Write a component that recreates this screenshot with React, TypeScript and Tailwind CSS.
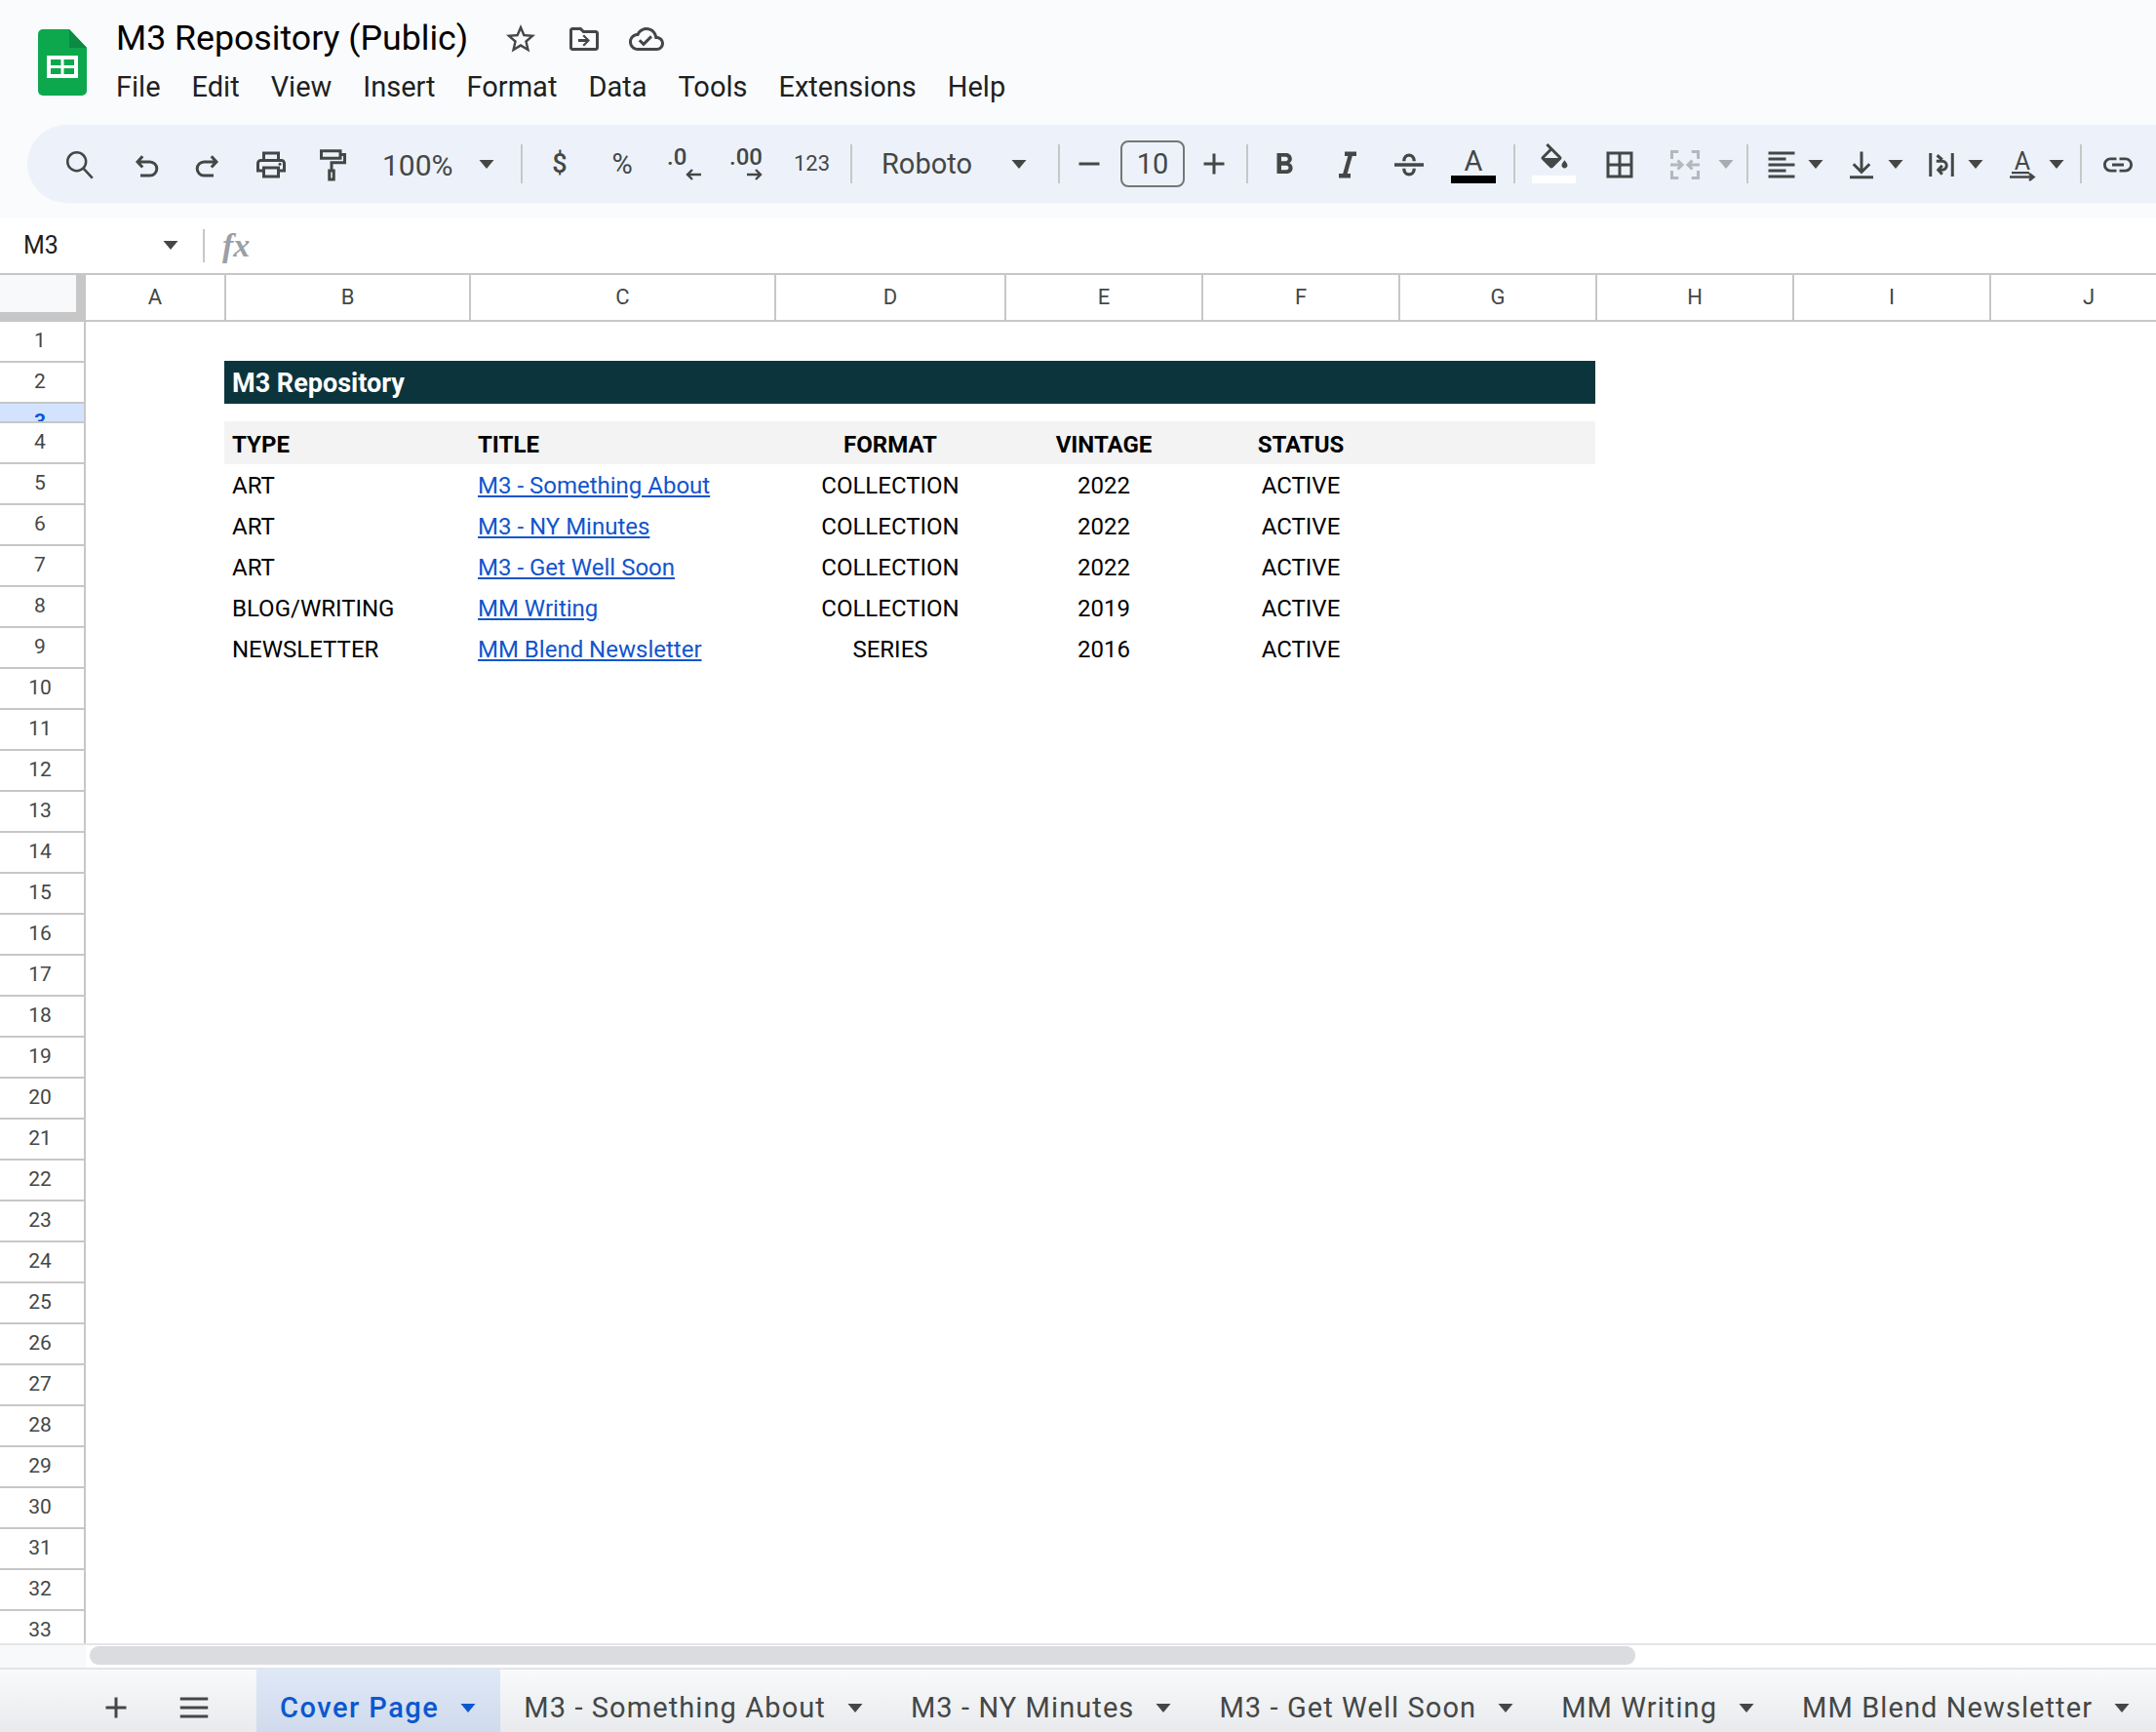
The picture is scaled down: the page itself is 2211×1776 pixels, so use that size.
import type { ReactNode } from "react";

const iconColor = "#444746";

function Icon({ d, className = "", fill = iconColor }: { d: string; className?: string; fill?: string }) {
  return (
    <svg className={`h-[36px] w-[36px] shrink-0 ${className}`} viewBox="0 0 24 24" fill={fill}>
      <path d={d} />
    </svg>
  );
}

function Line({ d, className = "", width = 2, color = iconColor }: { d: string; className?: string; width?: number; color?: string }) {
  return (
    <svg className={`h-[36px] w-[36px] shrink-0 ${className}`} viewBox="0 0 24 24" fill="none" stroke={color} strokeWidth={width}>
      <path d={d} />
    </svg>
  );
}

function Caret({ className = "", color = iconColor }: { className?: string; color?: string }) {
  return (
    <svg className={`h-[9px] w-[18px] shrink-0 ${className}`} viewBox="0 0 18 9" fill={color}>
      <path d="M1.5 0h15L9 9z" />
    </svg>
  );
}

function Sep({ className = "" }: { className?: string }) {
  return <div className={`h-[40px] w-[2px] shrink-0 bg-[#c7c7c7] ${className}`} />;
}

function Logo() {
  return (
    <svg className="mt-[30px] ml-[39px] h-[68px] w-[50px] shrink-0" viewBox="0 0 50 68">
      <path d="M5 0h27l18 19v44a5 5 0 0 1-5 5H5a5 5 0 0 1-5-5V5a5 5 0 0 1 5-5z" fill="#0da84e" />
      <path d="M32 0v19h18z" fill="#0b8a41" />
      <path d="M9 27h32v23H9z" fill="#fff" />
      <path d="M13 31h10.500v6H13zM26.500 31H37v6H26.500zM13 40h10.500v6H13zM26.500 40H37v6H26.500z" fill="#0da84e" />
    </svg>
  );
}

const menus = ["File", "Edit", "View", "Insert", "Format", "Data", "Tools", "Extensions", "Help"];

function Toolbar() {
  return (
    <div className="flex h-[80px] ml-[28px] items-center rounded-l-[40px] bg-[#edf2fa] pl-[36px] text-[#444746]">
      <Line className="mt-[2px]" width={1.7} d="M9.800 3.500a6.300 6.300 0 1 0 0 12.600 6.300 6.300 0 0 0 0-12.600zM14.200 14.300l6.300 6.800" />
      <Line className="ml-[32px] mt-[4px]" width={2} d="M9.500 5.500 6 9.300l3.500 3.700M6 9.300h8.500a4.700 4.700 0 0 1 0 9.400H8" />
      <Line className="ml-[27px] mt-[4px]" width={2} d="M14.500 5.500 18 9.300 14.500 13M18 9.300H9.500a4.700 4.700 0 0 0 0 9.400H16" />
      <svg className="ml-[29px] mt-[2px] h-[36px] w-[36px] shrink-0" viewBox="0 0 24 24" fill={iconColor}>
        <path d="M19 8h-1V3H6v5H5c-1.660 0-3 1.340-3 3v6h4v4h12v-4h4v-6c0-1.660-1.340-3-3-3zM8 5h8v3H8V5zm8 14H8v-4h8v4zm4-4h-2v-2H6v2H4v-4c0-.550.450-1 1-1h14c.550 0 1 .450 1 1v4z" />
        <circle cx="18" cy="11.500" r="1" />
      </svg>
      <Line className="ml-[26px] mt-[2px]" width={2} d="M5 2.500h13v5H5zM18 5h3v5.500h-9V16M10.500 16h3v6h-3z" />
      <span className="ml-[34px] mt-[3px] w-[74px] shrink-0 text-[30px] leading-none">100%</span>
      <Caret className="ml-[24px]" />
      <Sep className="ml-[26px]" />
      <span className="ml-[20px] w-[36px] shrink-0 text-center text-[27px] font-medium leading-none">$</span>
      <span className="ml-[28px] w-[36px] shrink-0 text-center text-[29px] leading-none">%</span>
      <div className="ml-[27px] mt-[2px] flex h-[36px] w-[36px] shrink-0 flex-col items-start pl-[1px]">
        <span className="h-[20px] text-[24px] font-medium leading-[20px]">.0</span>
        <svg className="ml-[19px] mt-[2px] h-[12px] w-[16px]" viewBox="0 0 16 12" fill="none" stroke={iconColor} strokeWidth={2.4}>
          <path d="M16 6H2M7 1 2 6l5 5" />
        </svg>
      </div>
      <div className="ml-[29px] mt-[2px] flex h-[36px] w-[36px] shrink-0 flex-col items-start">
        <span className="h-[20px] text-[24px] font-medium leading-[20px]">.00</span>
        <svg className="ml-[18px] mt-[2px] h-[12px] w-[16px]" viewBox="0 0 16 12" fill="none" stroke={iconColor} strokeWidth={2.4}>
          <path d="M0 6h14M9 1l5 5-5 5" />
        </svg>
      </div>
      <span className="ml-[30px] w-[36px] shrink-0 text-center text-[22px] leading-none">123</span>
      <Sep className="ml-[22px]" />
      <span className="ml-[30px] w-[94px] shrink-0 text-[29px] leading-none">Roboto</span>
      <Caret className="ml-[38px]" />
      <Sep className="ml-[31px]" />
      <Line className="ml-[12px]" d="M5 12h14" />
      <div className="ml-[14px] flex h-[48px] w-[66px] shrink-0 items-center justify-center rounded-[8px] border-2 border-[#747775] text-[29px] leading-none">10</div>
      <Line className="ml-[12px]" d="M5 12h14M12 5v14" />
      <Sep className="ml-[15px]" />
      <Icon className="ml-[19px] mt-[2px]" d="M15.600 10.790c.970-.670 1.650-1.770 1.650-2.790 0-2.260-1.750-4-4-4H7v14h7.040c2.090 0 3.710-1.700 3.710-3.790 0-1.520-.860-2.820-2.150-3.420zM10 6.500h3c.830 0 1.500.670 1.500 1.500s-.670 1.500-1.500 1.500h-3v-3zm3.500 9H10v-3h3.500c.830 0 1.500.670 1.500 1.500s-.670 1.500-1.500 1.500z" />
      <Icon className="ml-[29px] mt-[2px]" d="M10 3v3h2.210l-3.420 12H6v3h8v-3h-2.210l3.420-12H18V3z" />
      <Line className="ml-[27px] mt-[2px]" width={2.2} d="M2 12h20M8.500 9.500c0-5.500 7-5.500 7 0M8.500 14.500c0 5.500 7 5.500 7 0" />
      <div className="ml-[25px] flex w-[46px] shrink-0 flex-col items-center self-start pt-[22px]">
        <span className="h-[30px] text-[29px] leading-[30px]">A</span>
        <div className="h-[8px] w-[46px] bg-black" />
      </div>
      <Sep className="ml-[18px]" />
      <div className="ml-[17px] flex w-[45px] shrink-0 flex-col items-center self-start pt-[19px]">
        <svg className="-mb-[3px] h-[36px] w-[36px]" viewBox="0 0 24 24" fill={iconColor}>
          <path d="M16.560 8.940 7.620 0 6.210 1.410l2.380 2.380-5.150 5.150c-.590.590-.590 1.540 0 2.120l5.500 5.500c.290.290.680.440 1.060.440s.770-.150 1.060-.440l5.500-5.500c.590-.580.590-1.530 0-2.120zM5.210 10 10 5.210 14.790 10H5.210zM19 11.500s-2 2.170-2 3.500c0 1.100.900 2 2 2s2-.900 2-2c0-1.330-2-3.500-2-3.500z" />
        </svg>
        <div className="h-[8px] w-[45px] bg-white" />
      </div>
      <Icon className="ml-[27px] mt-[2px]" d="M3 3v18h18V3H3zm8 16H5v-6h6v6zm0-8H5V5h6v6zm8 8h-6v-6h6v6zm0-8h-6V5h6v6z" />
      <Line className="ml-[31px] mt-[2px]" color="#b4b7bd" width={2} d="M3 8V3h4.500M21 8V3h-4.500M3 16v5h4.500M21 16v5h-4.500M2 12h8M7 9l3 3-3 3M22 12h-8M17 9l-3 3 3 3" />
      <Caret className="ml-[15px]" color="#a8abb1" />
      <Sep className="ml-[12px]" />
      <Icon className="ml-[16px] mt-[2px]" d="M15 15H3v2h12v-2zm0-8H3v2h12V7zM3 13h18v-2H3v2zm0 8h18v-2H3v2zM3 3v2h18V3H3z" />
      <Caret className="ml-[8px]" />
      <Line className="ml-[20px] mt-[2px]" d="M12 3v14M6.500 11.500l5.500 5.500 5.500-5.500M4 20.500h16" />
      <Caret className="ml-[8px]" />
      <Line className="ml-[20px] mt-[2px]" d="M4.500 4v16M19.500 4v16M9 5.500l3.500 3M8.500 9.500h4a3 3 0 0 1 0 6H10M12.500 12.500 9.800 15.500l2.700 3" />
      <Caret className="ml-[8px]" />
      <div className="ml-[21px] flex w-[36px] shrink-0 flex-col items-center self-start pt-[27px]">
        <span className="h-[21px] text-[25px] leading-[21px]">A</span>
        <svg className="h-[12px] w-[36px]" viewBox="0 0 36 12" fill="none" stroke={iconColor} strokeWidth={2.500}>
          <path d="M7 1h18M5 5.500h24M25 2l4.500 3.500L25 9" />
        </svg>
      </div>
      <Caret className="ml-[8px]" />
      <Sep className="ml-[15px]" />
      <Icon className="ml-[19px] mt-[2px]" d="M3.900 12c0-1.710 1.390-3.100 3.100-3.100h4V7H7c-2.760 0-5 2.240-5 5s2.240 5 5 5h4v-1.900H7c-1.710 0-3.100-1.390-3.100-3.100zM8 13h8v-2H8v2zm9-6h-4v1.900h4c1.710 0 3.100 1.390 3.100 3.100s-1.390 3.100-3.100 3.100h-4V17h4c2.760 0 5-2.240 5-5s-2.240-5-5-5z" />
    </div>
  );
}

function TopBar() {
  return (
    <div className="flex h-[223px] shrink-0 flex-col bg-[#f9fbfd]">
      <div className="flex h-[128px] shrink-0">
        <Logo />
        <div className="ml-[30px] flex flex-col pt-[15px]">
          <div className="flex h-[50px] items-center">
            <span className="w-[360px] whitespace-nowrap text-[35.700px] leading-none text-black">M3 Repository (Public)</span>
            <Icon className="ml-[37px]" d="m22 9.240-7.190-.620L12 2 9.190 8.630 2 9.240l5.460 4.730L5.820 21 12 17.270 18.180 21l-1.630-7.030L22 9.240zM12 15.400l-3.760 2.270 1-4.280-3.320-2.880 4.380-.380L12 6.100l1.710 4.040 4.380.380-3.320 2.880 1 4.280L12 15.400z" />
            <Icon className="ml-[29px]" d="M20 6h-8l-2-2H4c-1.100 0-1.990.900-1.990 2L2 18c0 1.100.900 2 2 2h16c1.100 0 2-.900 2-2V8c0-1.100-.900-2-2-2zm0 12H4V6h5.170l2 2H20v10zm-8-1 4-4-4-4-1.060 1.060L13.120 12H8v2h5.120l-2.180 1.940z" />
            <Icon className="ml-[28px]" d="M19.350 10.040C18.670 6.590 15.640 4 12 4 9.110 4 6.600 5.640 5.350 8.040 2.340 8.360 0 10.910 0 14c0 3.310 2.690 6 6 6h13c2.760 0 5-2.240 5-5 0-2.640-2.050-4.780-4.650-4.960zM19 18H6c-2.210 0-4-1.790-4-4 0-2.050 1.530-3.760 3.560-3.970l1.070-.110.500-.950C8.080 7.140 9.940 6 12 6c2.620 0 4.880 1.860 5.390 4.430l.300 1.500 1.530.110c1.560.100 2.780 1.410 2.780 2.960 0 1.650-1.350 3-3 3zm-9-3.820-2.090-2.090L6.500 13.500 10 17l6.010-6.010-1.410-1.410z" />
          </div>
          <div className="flex h-[48px] items-center gap-[32px] pt-[1px] text-[29px] leading-none text-[#1f1f1f]">
            {menus.map((m) => (
              <span key={m}>{m}</span>
            ))}
          </div>
        </div>
      </div>
      <Toolbar />
    </div>
  );
}

function FormulaBar() {
  return (
    <div className="flex h-[57px] shrink-0 items-center bg-white">
      <span className="ml-[24px] w-[142px] text-[25px] leading-none text-[#1f1f1f]">M3</span>
      <Caret />
      <div className="ml-[24px] h-[34px] w-[2px] bg-[#c7c7c7]" />
      <span className="ml-[18px] font-['Liberation_Serif',serif] text-[34px] font-bold italic leading-none text-[#9aa0a6]">fx</span>
    </div>
  );
}

const columns = [
  { name: "A", w: "w-[144px]" },
  { name: "B", w: "w-[251px]" },
  { name: "C", w: "w-[313px]" },
  { name: "D", w: "w-[236px]" },
  { name: "E", w: "w-[202px]" },
  { name: "F", w: "w-[202px]" },
  { name: "G", w: "w-[202px]" },
  { name: "H", w: "w-[202px]" },
  { name: "I", w: "w-[202px]" },
  { name: "J", w: "w-[202px]" },
];

function ColumnHeader() {
  return (
    <div className="flex h-[50px] shrink-0 border-y-2 border-[#c7c7c7] bg-white">
      <div className="flex h-full w-[88px] shrink-0 flex-col">
        <div className="flex h-[38px]">
          <div className="w-[78px] bg-[#f8f9fa]" />
          <div className="w-[10px] bg-[#c7c7c7]" />
        </div>
        <div className="flex-1 bg-[#c7c7c7]" />
      </div>
      {columns.map((c) => (
        <div key={c.name} className={`flex shrink-0 items-center justify-center border-r-2 border-[#c7c7c7] text-[22px] leading-none text-[#444746] ${c.w}`}>
          {c.name}
        </div>
      ))}
    </div>
  );
}

function RowHeader() {
  const rows = Array.from({ length: 33 }, (_, i) => i + 1);
  return (
    <div className="flex w-[88px] shrink-0 flex-col border-r-2 border-[#c7c7c7]">
      {rows.map((n) =>
        n === 3 ? (
          <div key={n} className="h-[20px] shrink-0 overflow-hidden border-b-2 border-[#c7c7c7] bg-[#d3e3fd] pr-[4px] text-center text-[21px] font-bold leading-[36px] text-[#0b57d0]">
            {n}
          </div>
        ) : (
          <div key={n} className="flex h-[42px] shrink-0 items-center justify-center border-b-2 border-[#c7c7c7] pr-[4px] pb-[2px] text-[21px] leading-none text-[#444746]">
            {n}
          </div>
        )
      )}
    </div>
  );
}

const rowCols = "grid grid-cols-[252px_313px_236px_202px_202px_202px] items-center";

const rows = [
  ["ART", "M3 - Something About", "COLLECTION", "2022", "ACTIVE"],
  ["ART", "M3 - NY Minutes", "COLLECTION", "2022", "ACTIVE"],
  ["ART", "M3 - Get Well Soon", "COLLECTION", "2022", "ACTIVE"],
  ["BLOG/WRITING", "MM Writing", "COLLECTION", "2019", "ACTIVE"],
  ["NEWSLETTER", "MM Blend Newsletter", "SERIES", "2016", "ACTIVE"],
];

function Sheet() {
  return (
    <div className="flex flex-1 flex-col bg-white pl-[142px] pt-[40px] text-[24px] leading-none text-black">
      <div className="flex h-[44px] w-[1406px] shrink-0 items-center bg-[#0c343d] pl-[8px] pt-[3px] text-[27px] font-bold text-white">M3 Repository</div>
      <div className={`${rowCols} mt-[18px] h-[44px] w-[1406px] bg-[#f3f3f3] pt-[3px] font-bold`}>
        <span className="pl-[8px]">TYPE</span>
        <span className="pl-[8px]">TITLE</span>
        <span className="text-center">FORMAT</span>
        <span className="text-center">VINTAGE</span>
        <span className="text-center">STATUS</span>
      </div>
      {rows.map((r) => (
        <div key={r[1]} className={`${rowCols} h-[42px] w-[1406px] pt-[2px]`}>
          <span className="pl-[8px]">{r[0]}</span>
          <span className="pl-[8px] text-[#1155cc] underline">{r[1]}</span>
          <span className="text-center">{r[2]}</span>
          <span className="text-center">{r[3]}</span>
          <span className="text-center">{r[4]}</span>
        </div>
      ))}
    </div>
  );
}

function ScrollBar() {
  return (
    <div className="flex h-[27px] shrink-0 border-y-2 border-[#e3e5e8] bg-white">
      <div className="w-[88px] bg-[#f8f9fa]" />
      <div className="ml-[4px] mt-[1px] h-[19px] w-[1585px] rounded-[9px] bg-[#dadce0]" />
    </div>
  );
}

const tabs = ["M3 - Something About", "M3 - NY Minutes", "M3 - Get Well Soon", "MM Writing", "MM Blend Newsletter"];

function Tab({ children, active = false }: { children: ReactNode; active?: boolean }) {
  return (
    <div
      className={`flex h-full shrink-0 items-center gap-[21px] px-[24px] pt-[14px] text-[29px] leading-none ${
        active ? "bg-linear-to-b from-[#dfe8f7] to-[#cfdaec] font-medium tracking-[1.500px] text-[#0b57d0]" : "tracking-[1.090px] text-[#444746]"
      }`}
    >
      <span>{children}</span>
      <Caret color={active ? "#0b57d0" : iconColor} />
    </div>
  );
}

function TabBar() {
  return (
    <div className="flex flex-1 items-center overflow-hidden bg-linear-to-b from-[#f9fafb] to-[#e8eaed]">
      <Line className="ml-[101px] mt-[14px]" d="M12 5v14M5 12h14" width={2} />
      <Line className="ml-[44px] mt-[14px]" d="M2.500 6h19M2.500 12h19M2.500 18h19" width={2} />
      <div className="ml-[46px] flex h-full">
        <Tab active>Cover Page</Tab>
        {tabs.map((t) => (
          <Tab key={t}>{t}</Tab>
        ))}
      </div>
    </div>
  );
}

export default function App() {
  return (
    <div className="flex h-screen w-full flex-col overflow-hidden bg-white font-['Roboto',sans-serif]">
      <TopBar />
      <FormulaBar />
      <ColumnHeader />
      <div className="flex h-[1355px] shrink-0 overflow-hidden">
        <RowHeader />
        <Sheet />
      </div>
      <ScrollBar />
      <TabBar />
    </div>
  );
}
